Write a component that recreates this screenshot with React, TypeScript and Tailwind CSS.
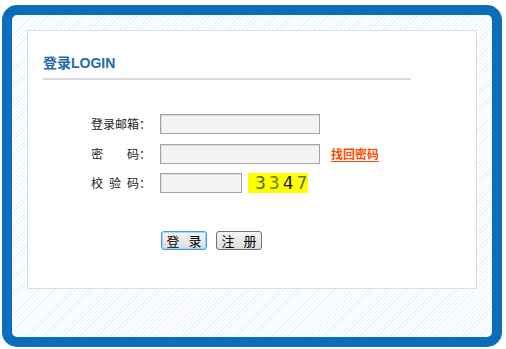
import { useState } from 'react';

function App() {
  const [email, setEmail] = useState('');
  const [password, setPassword] = useState('');
  const [code, setCode] = useState('');

  const inputCls =
    'h-[20px] border border-[#a5a5a5] bg-[#f4f4f4] px-1 text-[12px] outline-none shadow-[inset_1px_1px_0_#dcdcdc]';

  return (
    <div className="w-[506px] h-[349px] bg-white pt-[5px] pl-[2px] font-['Noto_Sans_CJK_SC',sans-serif]">
      {/* Outer blue frame */}
      <div className="w-[500px] h-[342px] rounded-[15px] border-[10px] border-[#0a6ebd] bg-[repeating-linear-gradient(135deg,#ffffff_0px,#ffffff_2px,#e9f2fc_2px,#e9f2fc_3px)] p-[15px] pb-[48px]">
        {/* White panel */}
        <div className="h-full w-[450px] border border-[#d2e0f0] bg-white">
          <div className="pl-[15px] pt-[22px]">
            <h2 className="h-[20px] leading-[20px] text-[14px] font-bold text-[#2568ab] font-['Liberation_Sans','Noto_Sans_CJK_SC',sans-serif]">
              登录LOGIN
            </h2>
            <div className="mt-[5px] h-[2px] w-[368px] bg-[#d9d9d9]" />
          </div>

          {/* Form */}
          <div className="ml-[63px] mt-[34px] text-[12px] text-[#222]">
            <div className="flex h-[20px] items-center">
              <label className="w-[69px] leading-[20px]">登录邮箱：</label>
              <input className={`${inputCls} w-[160px]`} value={email} onChange={(e) => setEmail(e.target.value)} />
            </div>

            <div className="mt-[10px] flex h-[20px] items-center">
              <label className="flex w-[69px] leading-[20px]">
                <span className="w-[36px]">密</span>
                <span>码：</span>
              </label>
              <input
                type="password"
                className={`${inputCls} w-[160px]`}
                value={password}
                onChange={(e) => setPassword(e.target.value)}
              />
              <a href="#" className="ml-[11px] text-[12px] font-bold text-[#ff4a00] underline underline-offset-2">
                找回密码
              </a>
            </div>

            <div className="mt-[9px] flex h-[20px] items-center">
              <label className="flex w-[69px] leading-[20px]">
                <span className="w-[18px]">校</span>
                <span className="w-[18px]">验</span>
                <span>码：</span>
              </label>
              <input className={`${inputCls} w-[82px]`} value={code} onChange={(e) => setCode(e.target.value)} />
              <div className="ml-[6px] flex h-[20px] w-[60px] items-center bg-[#ffff00] pl-[7px] text-[17px] tracking-[3px] font-['DejaVu_Sans',sans-serif] leading-[20px]">
                <span className="text-[#4d6a1e]">3</span>
                <span className="text-[#6b7c2a]">3</span>
                <span className="text-[#1a1a1a]">4</span>
                <span className="text-[#5a7424]">7</span>
              </div>
            </div>

            <div className="ml-[70px] mt-[38px] flex gap-[9px]">
              <button className="flex h-[19px] w-[46px] items-center justify-center gap-[9px] rounded-[3px] border border-[#3c9ee0] bg-gradient-to-b from-[#f6f6f6] to-[#dcdcdc] text-[13px] leading-[17px] text-black shadow-[inset_0_0_0_1px_#a6d6f5]">
                <span>登</span>
                <span>录</span>
              </button>
              <button className="flex h-[19px] w-[46px] items-center justify-center gap-[9px] rounded-[3px] border border-[#707070] bg-gradient-to-b from-[#f6f6f6] to-[#dcdcdc] text-[13px] leading-[17px] text-black">
                <span>注</span>
                <span>册</span>
              </button>
            </div>
          </div>
        </div>
      </div>
    </div>
  );
}

export default App;
